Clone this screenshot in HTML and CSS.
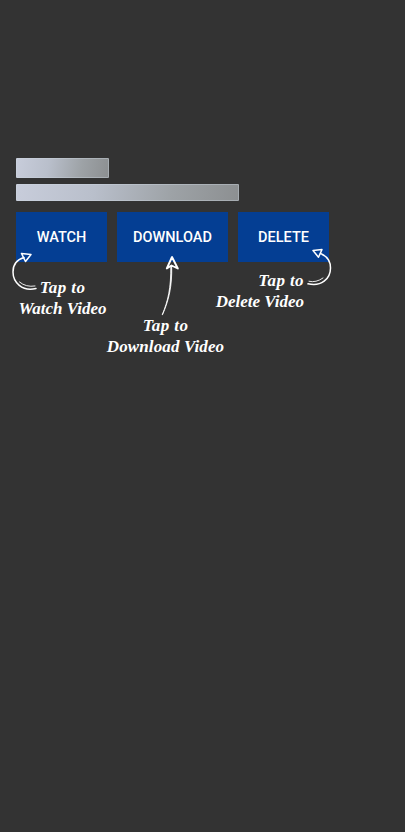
FILE: index.html
```html
<!DOCTYPE html>
<html lang="en">
<head>
<meta charset="utf-8">
<title>Video actions</title>
<link rel="stylesheet" href="styles.css">
</head>
<body>
<main class="guide">
  <div class="bar bar-title"></div>
  <div class="bar bar-subtitle"></div>
  <div class="actions">
    <section class="action">
      <button class="button">WATCH</button>
      <p class="hint hint-watch"><span class="tap">Tap to</span><span class="watch-text">Watch Video</span></p>
      <svg class="arrow arrow-watch" width="40" height="50" viewBox="0 0 40 50">
        <path d="M19 9.5C12 11.5 8 17 8 24C8 34 17 44 31 40.5"/>
        <path class="thin" d="M14.5 34Q21 39.5 30 38"/>
        <path d="M16.5 5.5L26 6.5L20.5 13.5Z"/>
      </svg>
    </section>
    <section class="action">
      <button class="button">DOWNLOAD</button>
      <p class="hint hint-download"><span class="tap">Tap to</span><span class="download-text">Download Video</span></p>
      <svg class="arrow arrow-download" width="40" height="70" viewBox="0 0 40 70">
        <path class="tail" d="M12.3 64.5C18 51 21 38 20.8 16L21.7 16C22.2 36 19 50 12.6 64.5Z"/>
        <path class="head" d="M22 7L16.8 18.5L21.5 15.5L27.8 18.5Z"/>
      </svg>
    </section>
    <section class="action">
      <button class="button">DELETE</button>
      <p class="hint hint-delete"><span class="tap">Tap to</span><span class="delete-text">Delete Video</span></p>
      <svg class="arrow arrow-delete" width="40" height="50" viewBox="0 0 40 50">
        <path d="M20.5 13.5C26.5 16 30.5 21 30.5 28C30.5 39 21 47 8 43.8"/>
        <path class="thin" d="M9 41.3Q16 43 23 38"/>
        <path d="M13 10.5L22 9.5L18.5 17.2Z"/>
      </svg>
    </section>
  </div>
</main>
</body>
</html>
```
FILE: styles.css
```css
body {
  margin: 0;
  min-height: 832px;
  background: #333;
  color: #fff;
  overflow: hidden;
}
.guide { padding: 158px 0 0 16px; }
.bar {
  box-sizing: border-box;
  border: 1px solid rgba(205, 215, 225, .4);
  border-radius: 1px;
  background: linear-gradient(100deg, #c8cddb, #b9bfcb 35%, #9da2a6 70%, #8c8f91) border-box;
}
.bar-title { width: 93px; height: 20px; }
.bar-subtitle { width: 223px; height: 17px; margin-top: 6px; }
.actions {
  display: grid;
  grid-template-columns: 91px 111px 91px;
  gap: 10px;
  margin-top: 11px;
}
.action { position: relative; }
.button {
  display: block;
  width: 100%;
  height: 50px;
  padding: 1px 0 0;
  border: 0;
  background: #043e93;
  color: #fff;
  font: 500 14.5px Roboto, sans-serif;
}
.hint {
  display: flex;
  flex-direction: column;
  align-items: center;
  margin: 0;
  font: italic bold 17px/21px "Liberation Serif", serif;
  white-space: nowrap;
}
.tap { letter-spacing: .4px; }
.hint-watch { margin: 15px -4px 0 -2px; }
.hint-download { margin: 53px 0 0 -14px; }
.download-text { letter-spacing: .12px; }
.hint-delete { margin: 8px 25px 0 0; align-items: flex-end; }
.arrow {
  position: absolute;
  fill: none;
  stroke: #fff;
  stroke-width: 1.5;
  stroke-linecap: round;
  stroke-linejoin: round;
}
.arrow .thin { stroke-width: .9; }
.arrow .tail { fill: #fff; stroke-width: .8; }
.arrow .head { stroke-width: 1.9; }
.arrow-watch { left: -11px; top: 36px; }
.arrow-download { left: 33px; top: 38px; }
.arrow-delete { left: 62px; top: 28px; }
```
